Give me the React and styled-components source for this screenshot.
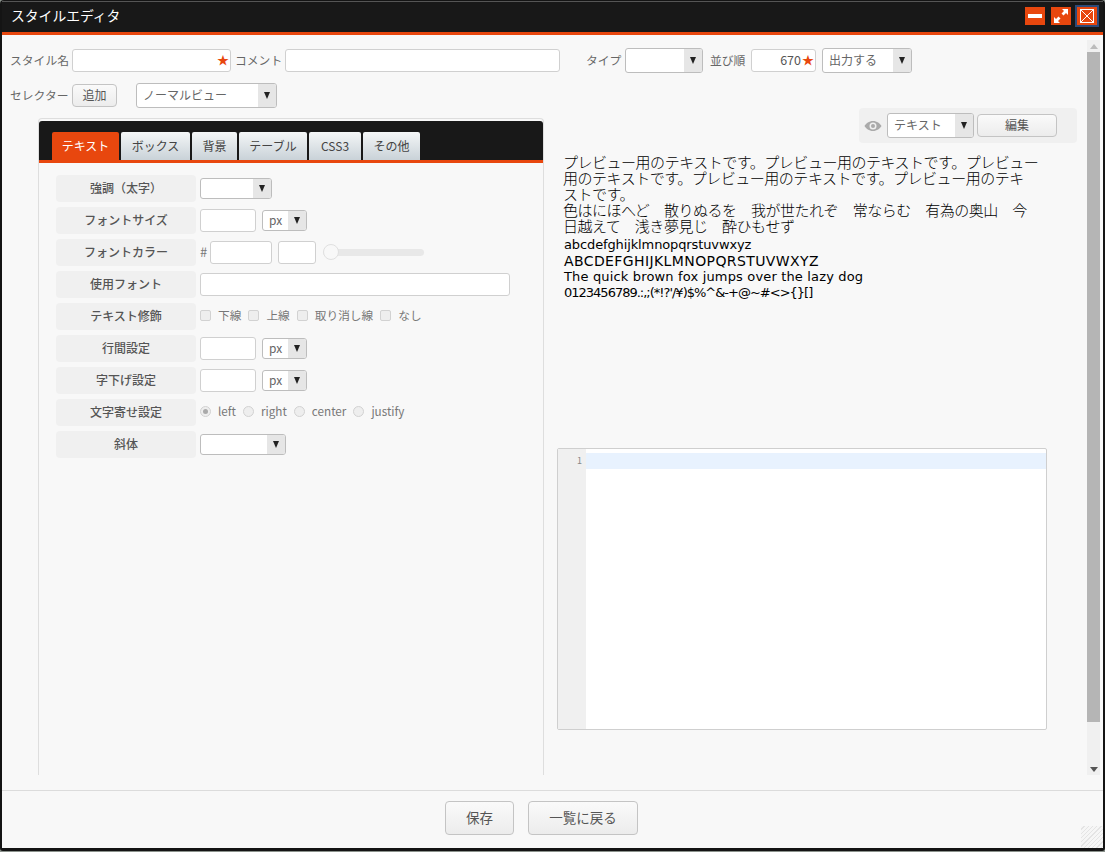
import React from "react";
import styled, { createGlobalStyle } from "styled-components";

const ORANGE = "#e8470e";
const JP = '"Noto Sans CJK JP", "Noto Sans", sans-serif';

const GlobalStyle = createGlobalStyle`
  html, body { margin: 0; padding: 0; background: #8b928c; }
  * { box-sizing: border-box; }
  body { font-family: ${JP}; font-size: 12px; color: #555; overflow: hidden; }
`;

const Win = styled.div`
  width: 1105px;
  height: 851px;
  display: flex;
  flex-direction: column;
  background: #f8f8f8;
  border: solid #141414;
  border-width: 1px 2px 3px 2px;
  border-radius: 4px 4px 3px 3px;
  position: relative;
`;

const TitleBar = styled.div`
  height: 34px;
  flex: none;
  display: flex;
  align-items: center;
  justify-content: space-between;
  padding: 0 6px 2px 9px;
  background: #181818;
  border-top: 1px solid #555;
  border-bottom: 3px solid ${ORANGE};
  color: #fff;
`;

const Title = styled.span`
  font-size: 13.8px;
  padding-bottom: 2px;
`;

const WinButtons = styled.div`
  display: flex;
  gap: 6px;
`;

const WinButton = styled.div`
  width: 20px;
  height: 18px;
  display: flex;
  align-items: center;
  justify-content: center;
  background: ${ORANGE};
  outline: ${(p) => (p.$focus ? "2px solid #2c4a78" : "none")};
`;

const Body = styled.div`
  flex: 1;
  min-height: 0;
  display: flex;
`;

const Content = styled.div`
  flex: 1;
  min-width: 0;
  padding: 13px 0 0 8px;
  display: flex;
  flex-direction: column;
`;

const TopRow = styled.div`
  display: flex;
  align-items: center;
  height: 25px;
  margin-top: ${(p) => p.$mt || 0}px;
`;

const FieldLabel = styled.span`
  width: ${(p) => p.$w}px;
  margin-left: ${(p) => p.$ml || 0}px;
  padding-bottom: 2px;
  flex: none;
  white-space: nowrap;
  font-size: 11.8px;
  color: #666;
`;

const TextInput = styled.div`
  position: relative;
  flex: none;
  width: ${(p) => p.$w}px;
  height: ${(p) => p.$h || 23}px;
  margin-left: ${(p) => p.$ml || 0}px;
  background: #fff;
  border: 1px solid #d0d0d0;
  border-radius: 3px;
  text-align: right;
  padding-right: 14px;
  line-height: 19px;
  font-size: 12.5px;
  color: #555;
`;

const Star = styled.span`
  position: absolute;
  right: 1px;
  top: 0;
  line-height: 19px;
  font-size: 12px;
  color: ${ORANGE};
`;

const SelectBox = styled.div`
  flex: none;
  width: ${(p) => p.$w}px;
  height: ${(p) => p.$h || 25}px;
  margin-left: ${(p) => p.$ml || 0}px;
  display: flex;
  background: #fff;
  border: 1px solid #bdbdbd;
  border-radius: 3px;
  overflow: hidden;
`;

const SelectValue = styled.span`
  flex: 1;
  padding: 0 0 2px 6px;
  align-self: center;
  font-size: 12px;
  color: #666;
  white-space: nowrap;
`;

const SelectArrow = styled.span`
  flex: none;
  width: 18px;
  display: flex;
  align-items: center;
  justify-content: center;
  background: #e6e6e6;
`;

const ArrowGlyph = styled.i`
  width: 0;
  height: 0;
  border-left: 3.5px solid transparent;
  border-right: 3.5px solid transparent;
  border-top: 7px solid #222;
`;

const Button = styled.div`
  flex: none;
  width: ${(p) => p.$w}px;
  height: ${(p) => p.$h}px;
  margin-left: ${(p) => p.$ml || 0}px;
  padding-bottom: 2px;
  display: flex;
  align-items: center;
  justify-content: center;
  border: 1px solid #c4c4c4;
  border-radius: 4px;
  background: linear-gradient(#fafafa, #ececec);
  font-size: ${(p) => p.$size || 12}px;
  color: #555;
`;

const Main = styled.div`
  flex: 1;
  min-height: 0;
  display: flex;
`;

const LeftPane = styled.div`
  flex: none;
  width: 506px;
  margin: 10px 0 15px 28px;
  padding: 2px 0 0 0;
  border: solid #dedede;
  border-width: 1px 1px 0 1px;
  border-radius: 4px 4px 0 0;
`;

const TabBar = styled.div`
  height: 42px;
  display: flex;
  align-items: flex-end;
  gap: 2px;
  padding-left: 13px;
  background: #181818;
  border-bottom: 3px solid ${ORANGE};
  border-radius: 3px 3px 0 0;
`;

const Tab = styled.div`
  width: ${(p) => p.$w}px;
  height: 28px;
  padding-bottom: 2px;
  display: flex;
  align-items: center;
  justify-content: center;
  font-size: 12px;
  color: ${(p) => (p.$active ? "#fff" : "#444")};
  background: ${(p) => (p.$active ? ORANGE : "linear-gradient(#f4f6f7, #c9d2d8)")};
  border-radius: 2px 2px 0 0;
`;

const FormList = styled.div`
  padding: 12px 0 0 17px;
  display: flex;
  flex-direction: column;
  gap: 5px;
`;

const FormRow = styled.div`
  display: flex;
  align-items: center;
  height: 27px;
`;

const RowLabel = styled.div`
  flex: none;
  width: 140px;
  height: 27px;
  margin-right: 4px;
  padding-bottom: 3px;
  display: flex;
  align-items: center;
  justify-content: center;
  background: #f0f0f0;
  border-radius: 4px;
  font-size: 12px;
  font-weight: 500;
  color: #555;
`;

const Hash = styled.span`
  width: 10px;
  flex: none;
  padding-bottom: 2px;
  font-size: 13px;
  color: #777;
`;

const Slider = styled.div`
  position: relative;
  width: 101px;
  height: 7px;
  margin-left: 7px;
  background: #e8e8e8;
  border-radius: 4px;
`;

const SliderHandle = styled.span`
  position: absolute;
  left: 0;
  top: -5px;
  width: 16px;
  height: 16px;
  background: #f8f8f8;
  border: 1px solid #e0e0e0;
  border-radius: 50%;
`;

const OptionGroup = styled.div`
  display: flex;
  align-items: center;
  padding-bottom: 4px;
`;

const Option = styled.label`
  display: flex;
  align-items: center;
  margin-right: 7px;
  font-size: 11.7px;
  color: #777;
`;

const Mark = styled.span`
  width: 11px;
  height: 11px;
  margin: 2px 7px 0 0;
  flex: none;
  display: flex;
  align-items: center;
  justify-content: center;
  background: #eee;
  border: 1px solid #d2d2d2;
  border-radius: ${(p) => (p.$round ? "50%" : "2px")};
  &::after {
    content: "";
    width: 5px;
    height: 5px;
    border-radius: 50%;
    background: ${(p) => (p.$on ? "#aaa" : "transparent")};
  }
`;

const RightPane = styled.div`
  flex: 1;
  min-width: 0;
  display: flex;
  flex-direction: column;
  margin-bottom: 15px;
`;

const PreviewTools = styled.div`
  align-self: flex-end;
  width: 218px;
  height: 35px;
  margin-right: 10px;
  display: flex;
  align-items: center;
  padding-left: 5px;
  background: #f0f0f0;
  border-radius: 4px;
`;

const Preview = styled.div`
  margin: 11px 0 0 19px;
  height: 294px;
  font-family: "Noto Sans CJK JP", sans-serif;
  font-weight: 300;
  color: #000;
`;

const PreviewLine = styled.div`
  font-size: 15px;
  letter-spacing: -0.48px;
  line-height: 16px;
  white-space: nowrap;
`;

const LatinBlock = styled.div`
  padding: 3px 0 0 1px;
`;

const LatinLine = styled.div`
  font-family: "DejaVu Sans", sans-serif;
  font-weight: 400;
  font-size: ${(p) => p.$size || 13}px;
  letter-spacing: ${(p) => p.$spacing || 0}px;
  line-height: 16px;
  white-space: nowrap;
`;

const Editor = styled.div`
  width: 490px;
  height: 282px;
  margin-left: 13px;
  display: flex;
  background: #fff;
  border: 1px solid #cfcfcf;
  border-radius: 2px;
`;

const Gutter = styled.div`
  width: 28px;
  flex: none;
  padding: 4px 4px 0 0;
  background: #f0f0f0;
  text-align: right;
  font-size: 9px;
  line-height: 16px;
  color: #888;
`;

const Code = styled.div`
  flex: 1;
  padding-top: 4px;
`;

const ActiveLine = styled.div`
  height: 16px;
  background: #e8f2fe;
`;

const ScrollTrack = styled.div`
  flex: none;
  width: 13px;
  margin: 5px 3px 15px 0;
  display: flex;
  flex-direction: column;
  align-items: stretch;
  background: #f0f0f0;
`;

const ScrollEnd = styled.div`
  height: 12px;
  flex: none;
  display: flex;
  align-items: center;
  justify-content: center;
  &::after {
    content: "";
    border-left: 4px solid transparent;
    border-right: 4px solid transparent;
    ${(p) => (p.$up ? "border-bottom: 5px solid #bbb;" : "border-top: 5px solid #555;")}
  }
`;

const ScrollThumb = styled.div`
  height: 670px;
  background: #b5b5b5;
`;

const ScrollRest = styled.div`
  flex: 1;
`;

const Footer = styled.div`
  flex: none;
  height: 58px;
  display: flex;
  justify-content: center;
  align-items: flex-start;
  padding: 10px 22px 0 0;
  border-top: 1px solid #dcdcdc;
`;

const ResizeGrip = styled.div`
  position: absolute;
  right: 0;
  bottom: 0;
  width: 22px;
  height: 22px;
  background: repeating-linear-gradient(135deg, #f6f6f6 0 2px, #e4e4e4 2px 3px);
`;

const TABS = [
  ["テキスト", 67, true],
  ["ボックス", 69],
  ["背景", 45],
  ["テーブル", 68],
  ["CSS3", 52],
  ["その他", 57],
];

const PREVIEW_LINES = [
  "プレビュー用のテキストです。プレビュー用のテキストです。プレビュー",
  "用のテキストです。プレビュー用のテキストです。プレビュー用のテキ",
  "ストです。",
  "色はにほへど　散りぬるを　我が世たれぞ　常ならむ　有為の奥山　今",
  "日越えて　浅き夢見じ　酔ひもせず",
];

const Select = ({ w, h, ml, value }) => (
  <SelectBox $w={w} $h={h} $ml={ml}>
    <SelectValue>{value}</SelectValue>
    <SelectArrow>
      <ArrowGlyph />
    </SelectArrow>
  </SelectBox>
);

const PxField = () => (
  <>
    <TextInput $w={56} $h={23} />
    <Select w={45} h={21} ml={6} value="px" />
  </>
);

export default function App() {
  return (
    <>
      <GlobalStyle />
      <Win>
        <TitleBar>
          <Title>スタイルエディタ</Title>
          <WinButtons>
            <WinButton>
              <svg width="14" height="4" viewBox="0 0 14 4">
                <rect width="14" height="4" fill="#fff" />
              </svg>
            </WinButton>
            <WinButton>
              <svg width="16" height="16" viewBox="0 0 16 16" fill="#fff">
                <path d="M9 1h6v6l-2-2-2.5 2.5-2-2L11 3zM7 15H1V9l2 2 2.5-2.5 2 2L5 13z" />
              </svg>
            </WinButton>
            <WinButton $focus>
              <svg width="14" height="14" viewBox="0 0 14 14" fill="none" stroke="#fff" strokeWidth="1">
                <rect x=".5" y=".5" width="13" height="13" />
                <path d="M1 1l12 12M13 1L1 13" />
              </svg>
            </WinButton>
          </WinButtons>
        </TitleBar>
        <Body>
          <Content>
            <TopRow>
              <FieldLabel $w={62}>スタイル名</FieldLabel>
              <TextInput $w={159}>
                <Star>★</Star>
              </TextInput>
              <FieldLabel $w={50} $ml={4}>コメント</FieldLabel>
              <TextInput $w={275} />
              <FieldLabel $w={39} $ml={26}>タイプ</FieldLabel>
              <Select w={78} />
              <FieldLabel $w={41} $ml={7}>並び順</FieldLabel>
              <TextInput $w={65}>
                670
                <Star>★</Star>
              </TextInput>
              <Select w={90} ml={6} value="出力する" />
            </TopRow>
            <TopRow $mt={10}>
              <FieldLabel $w={62}>セレクター</FieldLabel>
              <Button $w={45} $h={23}>追加</Button>
              <Select w={141} ml={19} value="ノーマルビュー" />
            </TopRow>
            <Main>
              <LeftPane>
                <TabBar>
                  {TABS.map(([name, w, active]) => (
                    <Tab key={name} $w={w} $active={active}>{name}</Tab>
                  ))}
                </TabBar>
                <FormList>
                  <FormRow>
                    <RowLabel>強調（太字）</RowLabel>
                    <Select w={72} h={21} />
                  </FormRow>
                  <FormRow>
                    <RowLabel>フォントサイズ</RowLabel>
                    <PxField />
                  </FormRow>
                  <FormRow>
                    <RowLabel>フォントカラー</RowLabel>
                    <Hash>#</Hash>
                    <TextInput $w={62} />
                    <TextInput $w={38} $ml={6} />
                    <Slider>
                      <SliderHandle />
                    </Slider>
                  </FormRow>
                  <FormRow>
                    <RowLabel>使用フォント</RowLabel>
                    <TextInput $w={310} />
                  </FormRow>
                  <FormRow>
                    <RowLabel>テキスト修飾</RowLabel>
                    <OptionGroup>
                      {["下線", "上線", "取り消し線", "なし"].map((t) => (
                        <Option key={t}><Mark />{t}</Option>
                      ))}
                    </OptionGroup>
                  </FormRow>
                  <FormRow>
                    <RowLabel>行間設定</RowLabel>
                    <PxField />
                  </FormRow>
                  <FormRow>
                    <RowLabel>字下げ設定</RowLabel>
                    <PxField />
                  </FormRow>
                  <FormRow>
                    <RowLabel>文字寄せ設定</RowLabel>
                    <OptionGroup>
                      {["left", "right", "center", "justify"].map((t, i) => (
                        <Option key={t}><Mark $round $on={i === 0} />{t}</Option>
                      ))}
                    </OptionGroup>
                  </FormRow>
                  <FormRow>
                    <RowLabel>斜体</RowLabel>
                    <Select w={86} h={21} />
                  </FormRow>
                </FormList>
              </LeftPane>
              <RightPane>
                <PreviewTools>
                  <svg width="18" height="12" viewBox="0 0 18 12" fill="#aaa">
                    <path d="M9 1C5 1 2 3.500 .5 6 2 8.500 5 11 9 11s7-2.500 8.500-5C16 3.500 13 1 9 1zm0 8.500a3.500 3.500 0 1 1 0-7 3.500 3.500 0 0 1 0 7z" />
                    <circle cx="9" cy="6" r="2" />
                  </svg>
                  <Select w={87} ml={5} value="テキスト" />
                  <Button $w={80} $h={23} $ml={3}>編集</Button>
                </PreviewTools>
                <Preview>
                  {PREVIEW_LINES.map((line) => (
                    <PreviewLine key={line}>{line}</PreviewLine>
                  ))}
                  <LatinBlock>
                    <LatinLine $spacing={-0.12}>abcdefghijklmnopqrstuvwxyz</LatinLine>
                    <LatinLine $size={14} $spacing={0.4}>ABCDEFGHIJKLMNOPQRSTUVWXYZ</LatinLine>
                    <LatinLine $spacing={0.16}>The quick brown fox jumps over the lazy dog</LatinLine>
                    <LatinLine $spacing={-1}>0123456789.:,;(*!?'/¥)$%^&amp;-+@~#&lt;&gt;{"{}"}[]</LatinLine>
                  </LatinBlock>
                </Preview>
                <Editor>
                  <Gutter>1</Gutter>
                  <Code>
                    <ActiveLine />
                  </Code>
                </Editor>
              </RightPane>
            </Main>
          </Content>
          <ScrollTrack>
            <ScrollEnd $up />
            <ScrollThumb />
            <ScrollRest />
            <ScrollEnd />
          </ScrollTrack>
        </Body>
        <Footer>
          <Button $w={69} $h={34} $size={13.5}>保存</Button>
          <Button $w={110} $h={34} $ml={14} $size={13.5}>一覧に戻る</Button>
        </Footer>
        <ResizeGrip />
      </Win>
    </>
  );
}
